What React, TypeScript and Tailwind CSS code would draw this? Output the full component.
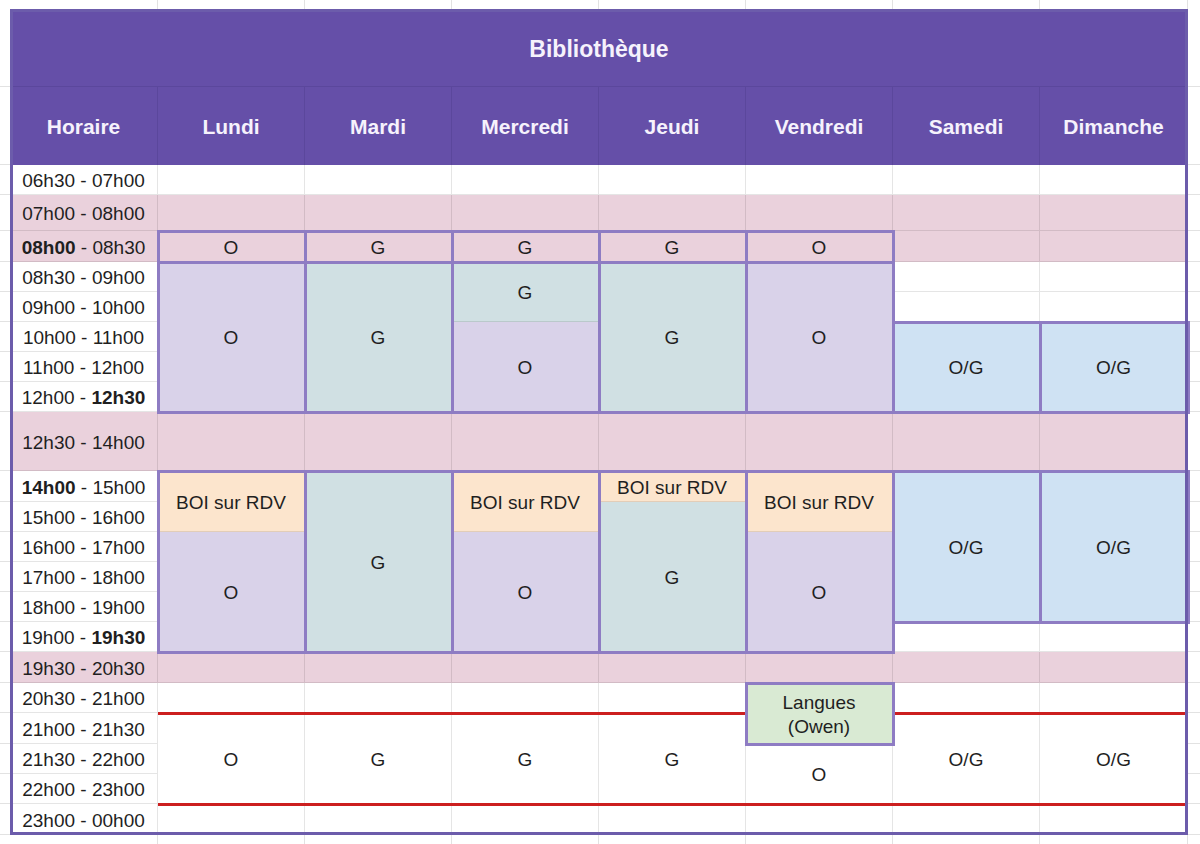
import type { ReactNode } from "react";

// same track sizes as the sheet: 8 columns, 23 rows (title, header, 21 slots)
const COLS = "grid-cols-[148px_147px_147px_147px_147px_147px_147px_148px]";
const ROWS =
  "grid-rows-[78px_78px_30px_36px_31px_30px_30px_30px_30px_30px_59px_31px_30px_30px_30px_30px_30px_31px_30px_31px_30px_30px_31px]";

const PINK = "bg-[#ead1dc]";
const LILAC = "bg-[#d9d2e9]";
const TEAL = "bg-[#d0e0e3]";
const BLUE = "bg-[#cfe2f3]";
const PEACH = "bg-[#fce5cd]";
const MINT = "bg-[#d9ead3]";
const WHITE = "bg-white";

const DAYS = [
  { pos: "col-start-1", name: "Horaire" },
  { pos: "col-start-2", name: "Lundi" },
  { pos: "col-start-3", name: "Mardi" },
  { pos: "col-start-4", name: "Mercredi" },
  { pos: "col-start-5", name: "Jeudi" },
  { pos: "col-start-6", name: "Vendredi" },
  { pos: "col-start-7", name: "Samedi" },
  { pos: "col-start-8", name: "Dimanche" },
];

const SLOTS: { pos: string; label: ReactNode; pink?: boolean }[] = [
  { pos: "row-start-3", label: "06h30 - 07h00" },
  { pos: "row-start-4", label: "07h00 - 08h00", pink: true },
  { pos: "row-start-5", label: <><b>08h00</b> - 08h30</>, pink: true },
  { pos: "row-start-6", label: "08h30 - 09h00" },
  { pos: "row-start-7", label: "09h00 - 10h00" },
  { pos: "row-start-8", label: "10h00 - 11h00" },
  { pos: "row-start-9", label: "11h00 - 12h00" },
  { pos: "row-start-10", label: <>12h00 - <b>12h30</b></> },
  { pos: "row-start-11", label: "12h30 - 14h00", pink: true },
  { pos: "row-start-12", label: <><b>14h00</b> - 15h00</> },
  { pos: "row-start-13", label: "15h00 - 16h00" },
  { pos: "row-start-14", label: "16h00 - 17h00" },
  { pos: "row-start-15", label: "17h00 - 18h00" },
  { pos: "row-start-16", label: "18h00 - 19h00" },
  { pos: "row-start-17", label: <>19h00 - <b>19h30</b></> },
  { pos: "row-start-18", label: "19h30 - 20h30", pink: true },
  { pos: "row-start-19", label: "20h30 - 21h00" },
  { pos: "row-start-20", label: "21h00 - 21h30" },
  { pos: "row-start-21", label: "21h30 - 22h00" },
  { pos: "row-start-22", label: "22h00 - 23h00" },
  { pos: "row-start-23", label: "23h00 - 00h00" },
];

// rows that are the same across the whole week
const EMPTY_ROWS = [
  { pos: "row-start-3", bg: WHITE },
  { pos: "row-start-4", bg: PINK },
  { pos: "row-start-11", bg: PINK },
  { pos: "row-start-18", bg: PINK },
  { pos: "row-start-23", bg: WHITE },
];

const CELLS: { pos: string; bg: string; text?: ReactNode; className?: string }[] = [
  // Lundi
  { pos: "col-start-2 row-start-5", bg: PINK, text: "O" },
  { pos: "col-start-2 row-start-6 row-span-5", bg: LILAC, text: "O" },
  { pos: "col-start-2 row-start-12 row-span-2", bg: PEACH, text: "BOI sur RDV" },
  { pos: "col-start-2 row-start-14 row-span-4", bg: LILAC, text: "O" },
  { pos: "col-start-2 row-start-19", bg: WHITE },
  { pos: "col-start-2 row-start-20 row-span-3", bg: WHITE, text: "O" },
  // Mardi
  { pos: "col-start-3 row-start-5", bg: PINK, text: "G" },
  { pos: "col-start-3 row-start-6 row-span-5", bg: TEAL, text: "G" },
  { pos: "col-start-3 row-start-12 row-span-6", bg: TEAL, text: "G" },
  { pos: "col-start-3 row-start-19", bg: WHITE },
  { pos: "col-start-3 row-start-20 row-span-3", bg: WHITE, text: "G" },
  // Mercredi
  { pos: "col-start-4 row-start-5", bg: PINK, text: "G" },
  { pos: "col-start-4 row-start-6 row-span-2", bg: TEAL, text: "G" },
  { pos: "col-start-4 row-start-8 row-span-3", bg: LILAC, text: "O" },
  { pos: "col-start-4 row-start-12 row-span-2", bg: PEACH, text: "BOI sur RDV" },
  { pos: "col-start-4 row-start-14 row-span-4", bg: LILAC, text: "O" },
  { pos: "col-start-4 row-start-19", bg: WHITE },
  { pos: "col-start-4 row-start-20 row-span-3", bg: WHITE, text: "G" },
  // Jeudi
  { pos: "col-start-5 row-start-5", bg: PINK, text: "G" },
  { pos: "col-start-5 row-start-6 row-span-5", bg: TEAL, text: "G" },
  { pos: "col-start-5 row-start-12", bg: PEACH, text: "BOI sur RDV" },
  { pos: "col-start-5 row-start-13 row-span-5", bg: TEAL, text: "G" },
  { pos: "col-start-5 row-start-19", bg: WHITE },
  { pos: "col-start-5 row-start-20 row-span-3", bg: WHITE, text: "G" },
  // Vendredi
  { pos: "col-start-6 row-start-5", bg: PINK, text: "O" },
  { pos: "col-start-6 row-start-6 row-span-5", bg: LILAC, text: "O" },
  { pos: "col-start-6 row-start-12 row-span-2", bg: PEACH, text: "BOI sur RDV" },
  { pos: "col-start-6 row-start-14 row-span-4", bg: LILAC, text: "O" },
  {
    pos: "col-start-6 row-start-19 row-span-2",
    bg: MINT,
    text: <>Langues<br />(Owen)</>,
    className: "z-[6] leading-[24px]",
  },
  { pos: "col-start-6 row-start-21 row-span-2", bg: WHITE, text: "O" },
  // Samedi
  { pos: "col-start-7 row-start-5", bg: PINK },
  { pos: "col-start-7 row-start-6", bg: WHITE },
  { pos: "col-start-7 row-start-7", bg: WHITE },
  { pos: "col-start-7 row-start-8 row-span-3", bg: BLUE, text: "O/G" },
  { pos: "col-start-7 row-start-12 row-span-5", bg: BLUE, text: "O/G" },
  { pos: "col-start-7 row-start-17", bg: WHITE },
  { pos: "col-start-7 row-start-19", bg: WHITE },
  { pos: "col-start-7 row-start-20 row-span-3", bg: WHITE, text: "O/G" },
  // Dimanche
  { pos: "col-start-8 row-start-5", bg: PINK },
  { pos: "col-start-8 row-start-6", bg: WHITE },
  { pos: "col-start-8 row-start-7", bg: WHITE },
  { pos: "col-start-8 row-start-8 row-span-3", bg: BLUE, text: "O/G" },
  { pos: "col-start-8 row-start-12 row-span-5", bg: BLUE, text: "O/G" },
  { pos: "col-start-8 row-start-17", bg: WHITE },
  { pos: "col-start-8 row-start-19", bg: WHITE },
  { pos: "col-start-8 row-start-20 row-span-3", bg: WHITE, text: "O/G" },
];

// thick purple outlines around the shift blocks
const FRAMES = [
  "col-start-2 row-start-5",
  "col-start-2 row-start-6 row-span-5",
  "col-start-2 row-start-12 row-span-6",
  "col-start-3 row-start-5",
  "col-start-3 row-start-6 row-span-5",
  "col-start-3 row-start-12 row-span-6",
  "col-start-4 row-start-5",
  "col-start-4 row-start-6 row-span-5",
  "col-start-4 row-start-12 row-span-6",
  "col-start-5 row-start-5",
  "col-start-5 row-start-6 row-span-5",
  "col-start-5 row-start-12 row-span-6",
  "col-start-6 row-start-5",
  "col-start-6 row-start-6 row-span-5",
  "col-start-6 row-start-12 row-span-6",
  "col-start-6 row-start-19 row-span-2",
  "col-start-7 row-start-8 row-span-3",
  "col-start-7 row-start-12 row-span-5",
  "col-start-8 row-start-8 row-span-3",
  "col-start-8 row-start-12 row-span-5",
];

function Cell({
  pos,
  bg,
  children,
  className = "",
}: {
  pos: string;
  bg: string;
  children?: ReactNode;
  className?: string;
}) {
  return (
    <div
      className={`${pos} ${bg} ${className} flex items-center justify-center border-r border-b border-black/10 pt-[4px] text-center`}
    >
      {children}
    </div>
  );
}

function Schedule() {
  return (
    <div
      className={`relative grid ${COLS} ${ROWS} font-['Liberation_Sans',Arial,sans-serif] text-[19px] text-[#1f1f1f]`}
    >
      <div className="col-start-1 col-span-8 row-start-1 flex items-center justify-center border-b border-[#5b479c] bg-[#654fa8] pt-[4px] text-[23px] font-bold text-[#f6f2fc]">
        Bibliothèque
      </div>

      {DAYS.map((d) => (
        <div
          key={d.name}
          className={`${d.pos} row-start-2 flex items-center justify-center border-r border-[#5b479c] bg-[#654fa8] pt-[2px] text-[21px] font-bold text-[#f6f2fc]`}
        >
          {d.name}
        </div>
      ))}

      {SLOTS.map((s) => (
        <Cell key={s.pos} pos={`col-start-1 ${s.pos}`} bg={s.pink ? PINK : WHITE}>
          <span className="whitespace-nowrap">{s.label}</span>
        </Cell>
      ))}

      {EMPTY_ROWS.map((r) => (
        <div key={r.pos} className={`${r.pos} col-start-2 col-span-7 grid grid-cols-subgrid`}>
          {DAYS.slice(1).map((d) => (
            <div key={d.name} className={`${r.bg} border-r border-b border-black/10`} />
          ))}
        </div>
      ))}

      {CELLS.map((c) => (
        <Cell key={c.pos} pos={c.pos} bg={c.bg} className={c.className}>
          {c.text}
        </Cell>
      ))}

      {/* red lines framing the evening slot */}
      <div className="col-start-2 col-span-7 row-start-20 z-[5] -mt-[1.5px] h-[3px] self-start bg-[#cc1f1f]" />
      <div className="col-start-2 col-span-7 row-start-22 z-[5] -mb-[1.5px] h-[3px] self-end bg-[#cc1f1f]" />

      {FRAMES.map((f) => (
        <div key={f} className={`${f} pointer-events-none z-10 -m-[1.5px] border-[3px] border-[#8e7cc3]`} />
      ))}

      <div className="pointer-events-none col-start-1 col-span-8 row-start-1 row-span-23 z-20 border-[3px] border-[#6c5cab]" />
    </div>
  );
}

export default function App() {
  return (
    <div className="grid h-[844px] w-[1200px] grid-cols-[10px_1178px_12px] grid-rows-[9px_826px_9px] overflow-hidden bg-white">
      {/* spreadsheet gridlines around the table */}
      <div />
      <div className={`grid ${COLS}`}>
        {DAYS.map((d) => (
          <div key={d.name} className="border-r border-[#e2e2e2]" />
        ))}
      </div>
      <div />

      <div className={`grid ${ROWS}`}>
        {SLOTS.concat(SLOTS.slice(0, 2)).map((_, i) => (
          <div key={i} className="border-b border-[#e2e2e2]" />
        ))}
      </div>
      <Schedule />
      <div className={`grid ${ROWS}`}>
        {SLOTS.concat(SLOTS.slice(0, 2)).map((_, i) => (
          <div key={i} className="border-b border-[#e2e2e2]" />
        ))}
      </div>

      <div />
      <div className={`grid ${COLS}`}>
        {DAYS.map((d) => (
          <div key={d.name} className="border-r border-[#e2e2e2]" />
        ))}
      </div>
      <div />
    </div>
  );
}
